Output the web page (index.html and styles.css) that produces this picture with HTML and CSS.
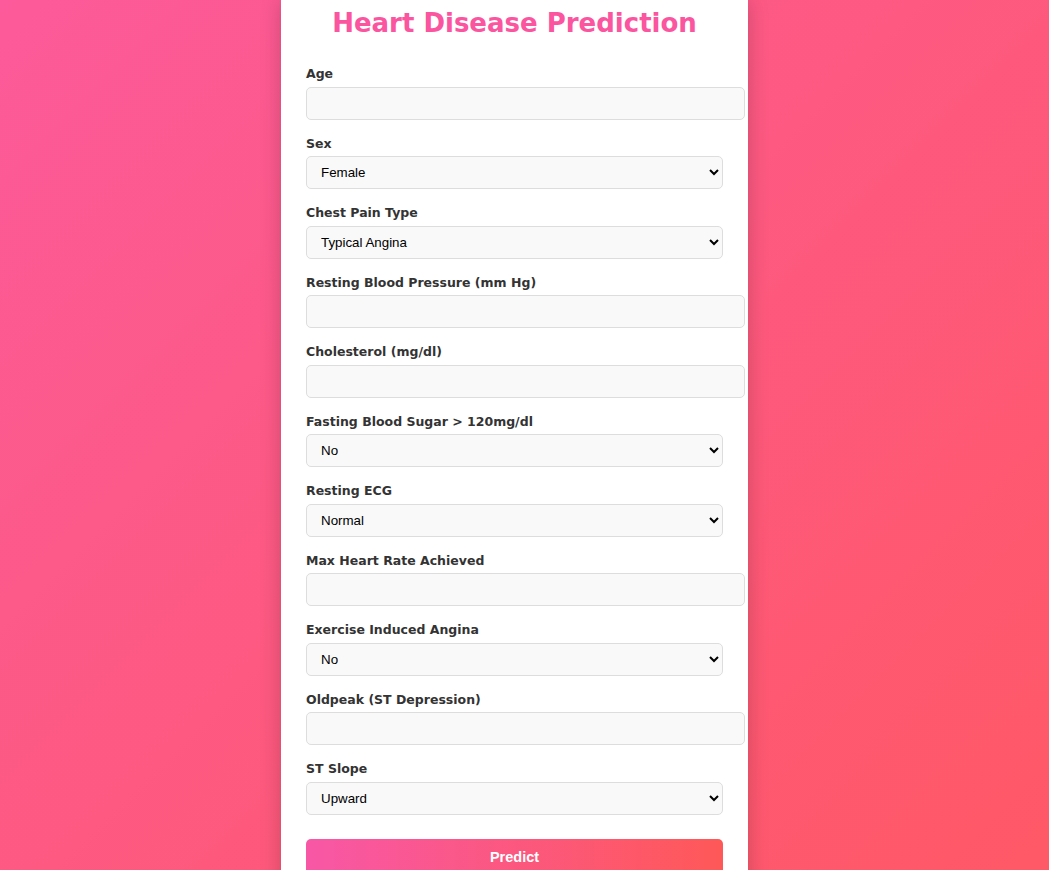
FILE: index.html
```html
<!DOCTYPE html>
<html lang="en">
<head>
<meta charset="utf-8">
<title>Heart Disease Prediction</title>
<link rel="stylesheet" href="styles.css">
</head>
<body>
<div class="page">
  <form class="card">
    <h1 class="title">Heart Disease Prediction</h1>
    <div class="group">
      <label class="label">Age</label>
      <input class="field" type="number">
    </div>
    <div class="group">
      <label class="label">Sex</label>
      <select class="choice"><option>Female</option><option>Male</option></select>
    </div>
    <div class="group">
      <label class="label">Chest Pain Type</label>
      <select class="choice"><option>Typical Angina</option><option>Atypical Angina</option></select>
    </div>
    <div class="group">
      <label class="label">Resting Blood Pressure (mm Hg)</label>
      <input class="field" type="number">
    </div>
    <div class="group">
      <label class="label">Cholesterol (mg/dl)</label>
      <input class="field" type="number">
    </div>
    <div class="group">
      <label class="label">Fasting Blood Sugar &gt; 120mg/dl</label>
      <select class="choice"><option>No</option><option>Yes</option></select>
    </div>
    <div class="group">
      <label class="label">Resting ECG</label>
      <select class="choice"><option>Normal</option><option>ST</option></select>
    </div>
    <div class="group">
      <label class="label">Max Heart Rate Achieved</label>
      <input class="field" type="number">
    </div>
    <div class="group">
      <label class="label">Exercise Induced Angina</label>
      <select class="choice"><option>No</option><option>Yes</option></select>
    </div>
    <div class="group">
      <label class="label">Oldpeak (ST Depression)</label>
      <input class="field" type="number">
    </div>
    <div class="group">
      <label class="label">ST Slope</label>
      <select class="choice"><option>Upward</option><option>Flat</option></select>
    </div>
    <button class="predict" type="button">Predict</button>
  </form>
</div>
</body>
</html>
```

FILE: styles.css
```css
html, body {
  margin: 0;
  padding: 0;
  height: 100%;
  overflow: hidden;
}
body {
  background: linear-gradient(135deg, #fc5a9a 0%, #ff5866 100%);
  font-family: "DejaVu Sans", sans-serif;
}
.page {
  display: flex;
  justify-content: center;
  padding-right: 20px;
}
.card {
  width: 417px;
  background: #fff;
  padding: 0 25px 30px;
  box-shadow: 0 0 20px rgba(0, 0, 0, 0.2);
}
.title {
  margin: 6px 0 25px;
  text-align: center;
  color: #fb55a0;
  font-size: 26px;
  font-weight: 700;
  line-height: 34px;
}
.group {
  margin-bottom: 15px;
}
.label {
  display: block;
  margin-bottom: 5px;
  padding-top: 1px;
  font-size: 12.5px;
  font-weight: 700;
  color: #333;
  line-height: 15.5px;
}
.field {
  display: block;
  width: 100%;
  padding: 8px 10px;
  border: 1px solid #ddd;
  border-radius: 5px;
  background: #f9f9f9;
  font-family: "Liberation Sans", Arial, sans-serif;
  font-size: 13.33px;
  height: 15px;
  box-sizing: content-box;
}
.choice {
  display: block;
  width: 100%;
  padding: 7px 10px;
  border: 1px solid #ddd;
  border-radius: 5px;
  background: #f9f9f9;
  font-family: "Liberation Sans", Arial, sans-serif;
  font-size: 13.33px;
  color: #000;
  height: 33px;
}
.predict {
  display: block;
  width: 100%;
  margin-top: 24px;
  padding: 10px;
  border: none;
  border-radius: 5px;
  background: linear-gradient(90deg, #f857a6, #ff5858);
  color: #fff;
  font-family: "Liberation Sans", Arial, sans-serif;
  font-size: 14.5px;
  font-weight: 700;
}
```
